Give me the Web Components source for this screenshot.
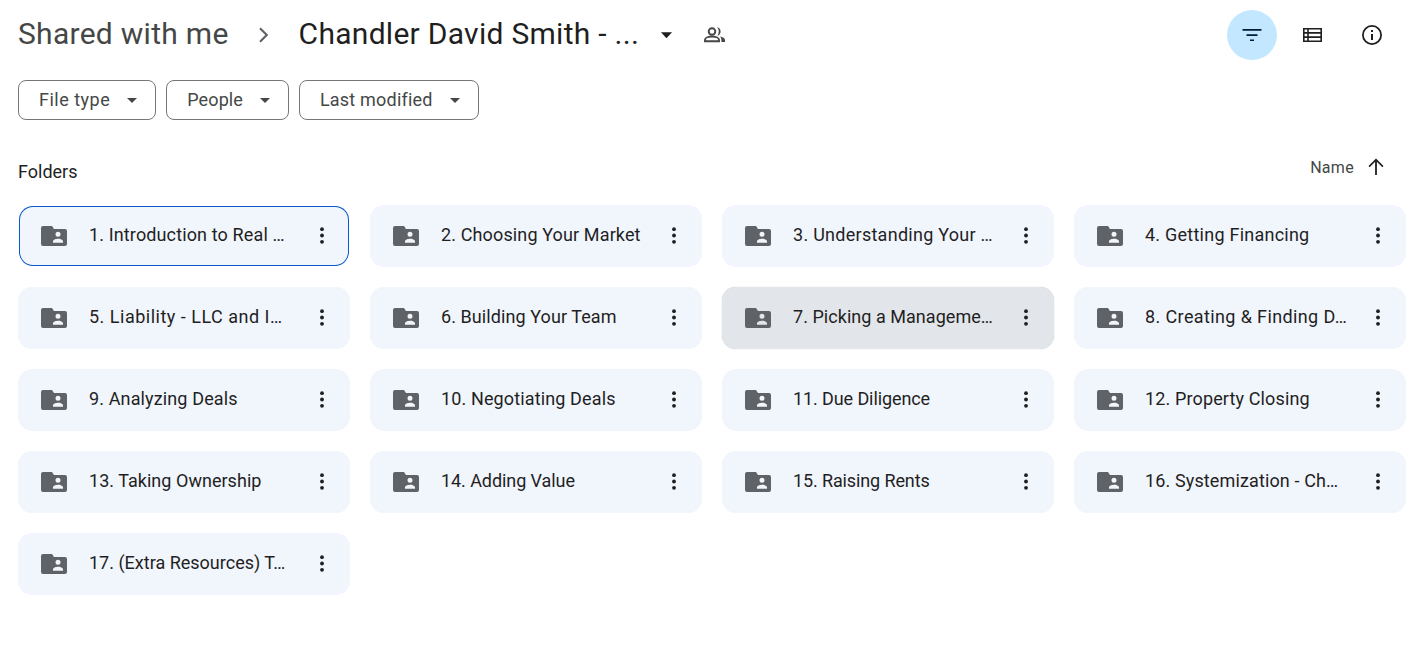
<!DOCTYPE html>
<html lang="en"><head><meta charset="utf-8"><title>Shared with me</title>
<style>
html,body{margin:0;padding:0;background:#fff;height:662px;overflow:hidden;font-family:Roboto,"Liberation Sans",sans-serif;}
</style></head><body>
<drive-page>
  <drive-header slot="header"></drive-header>
  <filter-bar slot="filters">
    <filter-chip style="letter-spacing:.5px">File type</filter-chip>
    <filter-chip style="letter-spacing:.1px">People</filter-chip>
    <filter-chip style="letter-spacing:.2px">Last modified</filter-chip>
  </filter-bar>
  <section-head slot="head">Folders</section-head>
  <folder-grid slot="grid">
    <folder-card focused>1. Introduction to Real …</folder-card>
    <folder-card>2. Choosing Your Market</folder-card>
    <folder-card style="letter-spacing:.27px">3. Understanding Your …</folder-card>
    <folder-card style="letter-spacing:.24px">4. Getting Financing</folder-card>
    <folder-card style="letter-spacing:.5px">5. Liability - LLC and I…</folder-card>
    <folder-card style="letter-spacing:.08px">6. Building Your Team</folder-card>
    <folder-card hovered style="letter-spacing:.04px">7. Picking a Manageme…</folder-card>
    <folder-card style="letter-spacing:.38px">8. Creating &amp; Finding D…</folder-card>
    <folder-card>9. Analyzing Deals</folder-card>
    <folder-card>10. Negotiating Deals</folder-card>
    <folder-card style="letter-spacing:-.1px">11. Due Diligence</folder-card>
    <folder-card>12. Property Closing</folder-card>
    <folder-card style="letter-spacing:.03px">13. Taking Ownership</folder-card>
    <folder-card style="letter-spacing:-.07px">14. Adding Value</folder-card>
    <folder-card style="letter-spacing:-.12px">15. Raising Rents</folder-card>
    <folder-card>16. Systemization - Ch…</folder-card>
    <folder-card style="letter-spacing:0">17. (Extra Resources) T…</folder-card>
  </folder-grid>
</drive-page>
<script>
const def=(name,html)=>customElements.define(name,class extends HTMLElement{
  constructor(){super();this.attachShadow({mode:'open'}).innerHTML=html;}
});
def('drive-page',`<style>
:host{display:flex;flex-direction:column;padding:10px 15px 0 18px;box-sizing:border-box;width:1421px;height:662px}
</style><slot name="header"></slot><slot name="filters"></slot><slot name="head"></slot><slot name="grid"></slot>`);
def('drive-header',`<style>
:host{display:flex;align-items:center;height:50px;color:#1f1f1f;margin-right:9px}
.a,.b{font-size:30px;letter-spacing:.28px;white-space:nowrap;line-height:46px;padding-bottom:2px}
.a{color:#444746}
.b{color:#1f1f1f}
.sep{margin:0 20px 0 20px;display:block}
svg{display:block;flex:none}
.sp{flex:1}
.caret{margin-left:21px}
.ppl{margin-left:29px}
.btn{width:50px;height:50px;border-radius:50%;display:flex;align-items:center;justify-content:center;margin-left:10px}
.btn.on{background:#c2e7ff;margin-left:0}
</style>
<span class="a">Shared with me</span>
<svg class="sep" width="30" height="30" viewBox="0 0 24 24" fill="#5f6368"><path d="M9.400 6 8.200 7.200 13 12l-4.800 4.800L9.400 18l6-6z"/></svg>
<span class="b">Chandler David Smith - ...</span>
<svg class="caret" width="13" height="7" viewBox="0 0 14 7" fill="#1f1f1f"><path d="M1 0h12L7 6.500z"/></svg>
<svg class="ppl" width="24" height="24" viewBox="0 0 24 24"><g fill="none" stroke="#444746" stroke-width="1.900"><circle cx="10" cy="8.500" r="3.300"/><path d="M3 18.200v-1.400c0-2.300 4-3.300 7-3.300s7 1 7 3.300v1.400z"/></g><path fill="#444746" d="M15.200 4.300a4.300 4.300 0 0 1 0 8.400 6.300 6.300 0 0 0 0-8.400zM18 13.400c2.700.6 5 1.700 5 3.600V19h-3.600v-2c0-1.500-.6-2.700-1.400-3.600z"/></svg>
<span class="sp"></span>
<span class="btn on"><svg width="24" height="24" viewBox="0 0 24 24" fill="#001d35"><path d="M2.500 6h19v1.700h-19zM6.500 11.200h11v1.700h-11zM10 16.400h4v1.700h-4z"/></svg></span>
<span class="btn"><svg width="24" height="24" viewBox="0 0 24 24" fill="#1f1f1f"><path fill-rule="evenodd" d="M3 5h19v14H3zM4.600 6.600v2.500h2.600V6.600zm4.200 0v2.500h11.600V6.600zM4.600 10.700v2.600h2.600v-2.600zm4.200 0v2.600h11.600v-2.600zM4.600 14.900v2.500h2.600v-2.500zm4.200 0v2.500h11.600v-2.500z"/></svg></span>
<span class="btn"><svg width="24" height="24" viewBox="0 0 24 24" fill="#1f1f1f"><path d="M11 7h2v2h-2zm0 4h2v6h-2zm1-9a10 10 0 1 0 0 20 10 10 0 0 0 0-20zm0 18.200a8.200 8.200 0 1 1 0-16.400 8.200 8.200 0 0 1 0 16.400z"/></svg></span>`);
def('filter-bar',`<style>:host{display:flex;gap:10px;margin-top:20px}</style><slot></slot>`);
def('filter-chip',`<style>
:host{display:flex;align-items:center;height:40px;box-sizing:border-box;border:1px solid #747775;border-radius:8px;padding:0 18px 2px 20px;font-size:18px;letter-spacing:.25px;color:#444746;white-space:nowrap}
svg{margin:2px 0 0 17px;display:block}
</style><slot></slot><svg width="10" height="5" viewBox="0 0 10 5" fill="#444746"><path d="M0 0h10L5 5z"/></svg>`);
def('section-head',`<style>
:host{display:flex;justify-content:space-between;align-items:flex-start;height:85px;box-sizing:border-box;padding-top:40px;font-size:18px;color:#1f1f1f}
.r{display:flex;align-items:center;font-size:16px;letter-spacing:.3px;color:#444746;margin-top:-5px;padding-right:18px;height:24px}
svg{margin-left:10px;display:block}
.l{line-height:24px}
</style><span class="l"><slot></slot></span><span class="r">Name<svg width="24" height="24" viewBox="0 0 24 24" fill="#1f1f1f"><path d="M12 3.500 4.500 11l1.200 1.200 5.400-5.400V20h1.800V6.800l5.400 5.400 1.200-1.200z"/></svg></span>`);
def('folder-grid',`<style>:host{display:grid;grid-template-columns:repeat(4,332px);grid-auto-rows:62px;gap:20px}</style><slot></slot>`);
def('folder-card',`<style>
:host{display:flex;align-items:center;box-sizing:border-box;height:62px;background:#f1f5fc;border-radius:14px;padding:0 16px 0 21px;font-size:18px;letter-spacing:.13px;color:#1f1f1f;min-width:0}
:host([focused]){box-shadow:inset 0 0 0 1px #0b57d0;margin:1px;height:60px;padding:0 15px 0 20px}
:host([hovered]){background:#e2e5e9;box-shadow:0 0 1px rgba(60,64,67,.35)}
.t{flex:1;min-width:0;white-space:nowrap;overflow:hidden;margin-left:22px;padding-bottom:3px;line-height:24px}
svg{display:block;flex:none}
</style>
<svg width="28" height="28" viewBox="0 0 28 28" fill="#5f6368"><path fill-rule="evenodd" d="M4 4h9l2 3h11a2 2 0 0 1 2 2v13a2 2 0 0 1-2 2H4a2 2 0 0 1-2-2V6a2 2 0 0 1 2-2zM19 9.800a2.500 2.500 0 1 0 0 5 2.500 2.500 0 0 0 0-5zM14 20.800h10v-1.500c0-1.700-3.200-2.600-5-2.600s-5 .9-5 2.600z"/></svg>
<span class="t"><slot></slot></span>
<svg width="24" height="24" viewBox="0 0 24 24" fill="#1f1f1f"><circle cx="12" cy="5.200" r="1.900"/><circle cx="12" cy="11.500" r="1.900"/><circle cx="12" cy="17.800" r="1.900"/></svg>`);
</script>
</body></html>
